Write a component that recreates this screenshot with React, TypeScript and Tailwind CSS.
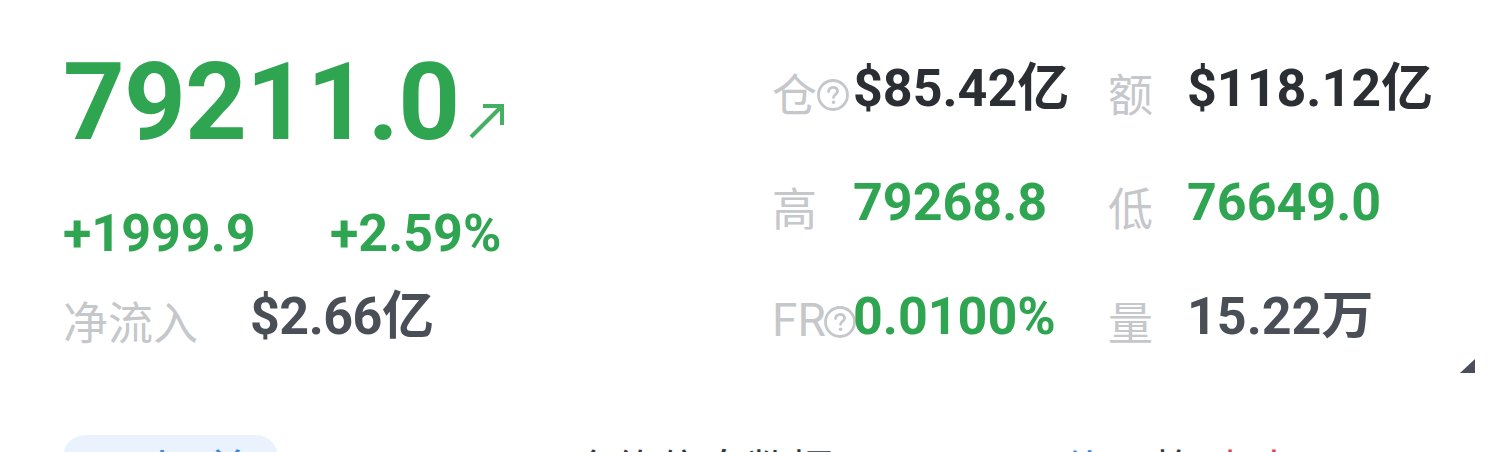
import React from "react";

const GREEN = "text-[#2fa552]";

function Help() {
  return (
    <svg width="34" height="34" viewBox="0 0 34 34" className="shrink-0">
      <circle cx="17" cy="17" r="14.5" fill="none" stroke="#c5c7cb" strokeWidth="2.8" />
      <path d="M12.6 13.6c0-2.6 2-4.3 4.5-4.3s4.5 1.6 4.5 3.9c0 3-4.1 3.2-4.1 6.2" fill="none" stroke="#c5c7cb" strokeWidth="2.8" strokeLinecap="round" />
      <circle cx="17.5" cy="24.3" r="1.8" fill="#c5c7cb" />
    </svg>
  );
}

function Arrow() {
  return (
    <svg width="40" height="40" viewBox="0 0 40 40" className="ml-[7px] mb-[15px] shrink-0">
      <path d="M5 36 L36 5 M17 5 H36 V24" fill="none" stroke="#45b064" strokeWidth="4" />
    </svg>
  );
}

export default function App() {
  const label = "text-[45px] leading-none text-[#c5c7cb] font-['Noto_Sans_CJK_SC',sans-serif]";
  const val = "text-[52px] leading-none font-bold whitespace-nowrap";
  const tab = "text-[44px] leading-none font-['Noto_Sans_CJK_SC',sans-serif]";
  return (
    <div className="w-[1500px] h-[452px] bg-white overflow-hidden relative font-['Roboto','Noto_Sans_CJK_SC',sans-serif]">
      <div className="flex items-start pl-[63px]">
        {/* left column */}
        <div className="w-[709px] pt-[48px] flex flex-col">
          <div className={`flex items-end text-[108px] leading-none font-bold tracking-[-1px] ${GREEN}`}>
            <span>79211.0</span>
            <Arrow />
          </div>
          <div className={`flex mt-[52px] ${val} ${GREEN}`}>
            <span className="w-[267px]">+1999.9</span>
            <span>+2.59%</span>
          </div>
          <div className="flex items-end mt-[31px]">
            <span className={`w-[187px] ${label}`}>净流入</span>
            <span className={`${val} text-[#4a4e57] tracking-[-0.5px]`}>$2.66亿</span>
          </div>
        </div>

        {/* right grid */}
        <div className="pt-[63px] flex flex-col gap-[62px]">
          <div className="flex items-end h-[52px]">
            <div className="w-[81px] flex items-center">
              <span className={label}>仓</span>
              <span className="-ml-[1px] -mr-[10px] mt-[4px]">
                <Help />
              </span>
            </div>
            <span className={`w-[255px] ${val} text-[#2b2e33]`}>$85.42亿</span>
            <span className={`w-[79px] ${label}`}>额</span>
            <span className={`${val} text-[#2b2e33]`}>$118.12亿</span>
          </div>
          <div className="flex items-end h-[52px]">
            <span className={`w-[81px] ${label}`}>高</span>
            <span className={`w-[255px] ${val} ${GREEN}`}>79268.8</span>
            <span className={`w-[79px] ${label}`}>低</span>
            <span className={`${val} ${GREEN}`}>76649.0</span>
          </div>
          <div className="flex items-end h-[52px]">
            <div className="w-[81px] flex items-center">
              <span className="text-[46px] leading-none text-[#c5c7cb] font-['Roboto',sans-serif]">FR</span>
              <span className="-ml-[3px] -mr-[30px] mt-[4px]">
                <Help />
              </span>
            </div>
            <span className={`w-[255px] ${val} ${GREEN}`}>0.0100%</span>
            <span className={`w-[79px] ${label}`}>量</span>
            <span className={`${val} text-[#4a4e57]`}>15.22万</span>
          </div>
        </div>
      </div>

      {/* corner triangle */}
      <div className="absolute left-[1460px] top-[359px] w-0 h-0 border-l-[15px] border-l-transparent border-b-[14px] border-b-[#4a4e5a]" />

      {/* bottom tabs, cut off by the window edge */}
      <div className="absolute left-0 top-[435px] w-full flex items-start">
        <div className="ml-[63px] w-[215px] h-[60px] rounded-[22px] bg-[#eaf3fd] flex justify-center pt-[11px]">
          <span className={`${tab} text-[#3d86e8] pl-[70px] tracking-[20px]`}>上首</span>
        </div>
        <span className={`ml-[292px] mt-[11px] ${tab} text-[#33363c]`}>合约信息数据</span>
        <span className={`ml-[228px] mt-[11px] ${tab} text-[#3d86e8]`}>价</span>
        <span className={`ml-[46px] mt-[11px] ${tab} text-[#33363c]`}>格</span>
        <span className={`ml-[12px] mt-[11px] ${tab} text-[#e0464f]`}>卖出</span>
      </div>
    </div>
  );
}
